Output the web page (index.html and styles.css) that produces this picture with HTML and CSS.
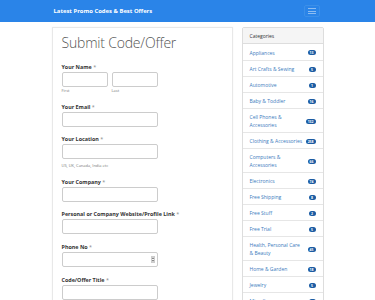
FILE: index.html
```html
<!DOCTYPE html>
<html lang="en">
<head>
    <meta charset="UTF-8">
    <meta name="viewport" content="width=device-width, initial-scale=1.0">
    <title>Submit Code/Offer</title>
    <link rel="stylesheet" href="styles.css">
</head>
<body>
    <nav class="navbar">
        <div class="container nav-inner">
            <a class="brand" href="#">Latest Promo Codes &amp; Best Offers</a>
            <button class="toggle" type="button">
                <span></span><span></span><span></span>
            </button>
        </div>
    </nav>

    <div class="container page">
        <div class="main-card">
            <h2>Submit Code/Offer</h2>

            <div class="form-group">
                <label>Your Name <span class="req">*</span></label>
                <div class="name-row">
                    <div class="name-col">
                        <input type="text">
                        <span class="sub">First</span>
                    </div>
                    <div class="name-col">
                        <input type="text">
                        <span class="sub">Last</span>
                    </div>
                </div>
            </div>

            <div class="form-group">
                <label>Your Email <span class="req">*</span></label>
                <input type="text">
            </div>

            <div class="form-group">
                <label>Your Location <span class="req">*</span></label>
                <input type="text">
                <span class="help">US, UK, Canada, India etc</span>
            </div>

            <div class="form-group">
                <label>Your Company <span class="req">*</span></label>
                <input type="text">
            </div>

            <div class="form-group">
                <label>Personal or Company Website/Profile Link <span class="req">*</span></label>
                <input type="text">
            </div>

            <div class="form-group">
                <label>Phone No <span class="req">*</span></label>
                <div class="number-wrap">
                    <input type="text">
                    <span class="spin"></span>
                </div>
            </div>

            <div class="form-group">
                <label>Code/Offer Title <span class="req">*</span></label>
                <input type="text">
            </div>
        </div>

        <aside class="side-card">
            <div class="side-head">Categories</div>
            <ul class="cat-list">
                <li><a href="#">Appliances</a><span class="badge">13</span></li>
                <li><a href="#">Art Crafts &amp; Sewing</a><span class="badge">5</span></li>
                <li><a href="#">Automotive</a><span class="badge">1</span></li>
                <li><a href="#">Baby &amp; Toddler</a><span class="badge">16</span></li>
                <li><a href="#">Cell Phones &amp; Accessories</a><span class="badge">132</span></li>
                <li><a href="#">Clothing &amp; Accessories</a><span class="badge">258</span></li>
                <li><a href="#">Computers &amp; Accessories</a><span class="badge">66</span></li>
                <li><a href="#">Electronics</a><span class="badge">74</span></li>
                <li><a href="#">Free Shipping</a><span class="badge">8</span></li>
                <li><a href="#">Free Stuff</a><span class="badge">2</span></li>
                <li><a href="#">Free Trial</a><span class="badge">5</span></li>
                <li><a href="#">Health, Personal Care &amp; Beauty</a><span class="badge">45</span></li>
                <li><a href="#">Home &amp; Garden</a><span class="badge">18</span></li>
                <li><a href="#">Jewelry</a><span class="badge">5</span></li>
                <li><a href="#">Miscellaneous</a><span class="badge">1</span></li>
            </ul>
        </aside>
    </div>
</body>
</html>
```

FILE: styles.css
```css
* {
    box-sizing: border-box;
}

body {
    margin: 0;
    font-family: 'Open Sans', 'Liberation Sans', sans-serif;
    background-color: #fff;
    color: #333;
}

.container {
    width: 272px;
    margin: 0 auto;
}

/* top bar */
.navbar {
    background-color: #2a84e8;
    height: 22px;
}

.nav-inner {
    display: flex;
    align-items: center;
    justify-content: space-between;
    height: 22px;
    padding: 0 2px 0 2px;
}

.brand {
    color: #fff;
    font-weight: 700;
    font-size: 5.9px;
    text-decoration: none;
}

.toggle {
    width: 16px;
    height: 12px;
    border: 1px solid #3b8fe9;
    border-radius: 2px;
    background: transparent;
    padding: 2px 3px;
    display: flex;
    flex-direction: column;
    justify-content: space-between;
    margin-right: 2px;
}

.toggle span {
    display: block;
    height: 1px;
    background-color: #8dbdf2;
}

/* page */
.page {
    display: flex;
    align-items: flex-start;
    gap: 9px;
    margin-top: 5px;
}

.main-card {
    width: 181px;
    border: 1px solid #e8e8e8;
    padding: 5px 10px 20px 9px;
    box-shadow: 0 0 2px rgba(0, 0, 0, 0.04);
}

h2 {
    font-weight: 300;
    font-size: 14px;
    line-height: 20px;
    margin: 0 0 10px 0;
    color: #555;
    letter-spacing: -0.2px;
}

.form-group {
    margin-bottom: 8.6px;
}

label {
    display: block;
    font-size: 5.4px;
    font-weight: 700;
    line-height: 8px;
    margin-bottom: 1px;
    color: #333;
}

.req {
    font-weight: 400;
    color: #888;
}

input {
    display: block;
    width: 96px;
    height: 15px;
    border: 1px solid #ccc;
    border-radius: 2px;
    padding: 0 3px;
    font-size: 5px;
    background: #fff;
}

.name-row {
    display: flex;
    gap: 4px;
}

.name-col input {
    width: 46px;
}

.sub {
    display: block;
    font-size: 4px;
    line-height: 6px;
    margin-top: 1px;
    color: #777;
}

.help {
    display: block;
    font-size: 4px;
    line-height: 6px;
    margin-top: 4px;
    color: #777;
}

.number-wrap {
    position: relative;
    width: 96px;
}

.spin {
    position: absolute;
    right: 3px;
    top: 4px;
    width: 4px;
    height: 7px;
    border: 1px solid #ccc;
    background: #f4f4f4;
}

.spin::before,
.spin::after {
    content: "";
    position: absolute;
    left: 0;
    border-left: 1px solid transparent;
    border-right: 1px solid transparent;
}

.spin::before {
    top: 0;
    border-bottom: 2px solid #666;
}

.spin::after {
    bottom: 0;
    border-top: 2px solid #666;
}

/* sidebar */
.side-card {
    width: 82px;
    border: 1px solid #ddd;
    border-radius: 2px;
}

.side-head {
    background-color: #f5f5f5;
    height: 16px;
    line-height: 16px;
    padding: 0 7px;
    font-size: 5px;
    color: #333;
    border-bottom: 1px solid #ddd;
}

.cat-list {
    list-style: none;
    margin: 0;
    padding: 0;
}

.cat-list li {
    display: flex;
    align-items: center;
    justify-content: space-between;
    gap: 3px;
    padding: 4px 7px 3px 7px;
    min-height: 16px;
    border-top: 1px solid #e6e6e6;
}

.cat-list li:first-child {
    border-top: none;
}

.cat-list a {
    color: #3c7bbd;
    font-size: 5px;
    line-height: 8px;
    text-decoration: none;
}

.badge {
    flex-shrink: 0;
    background-color: #1b5ca3;
    color: #fff;
    font-size: 3.4px;
    font-weight: 700;
    line-height: 5px;
    padding: 0 2px;
    min-width: 7px;
    text-align: center;
    border-radius: 3px;
}
```
